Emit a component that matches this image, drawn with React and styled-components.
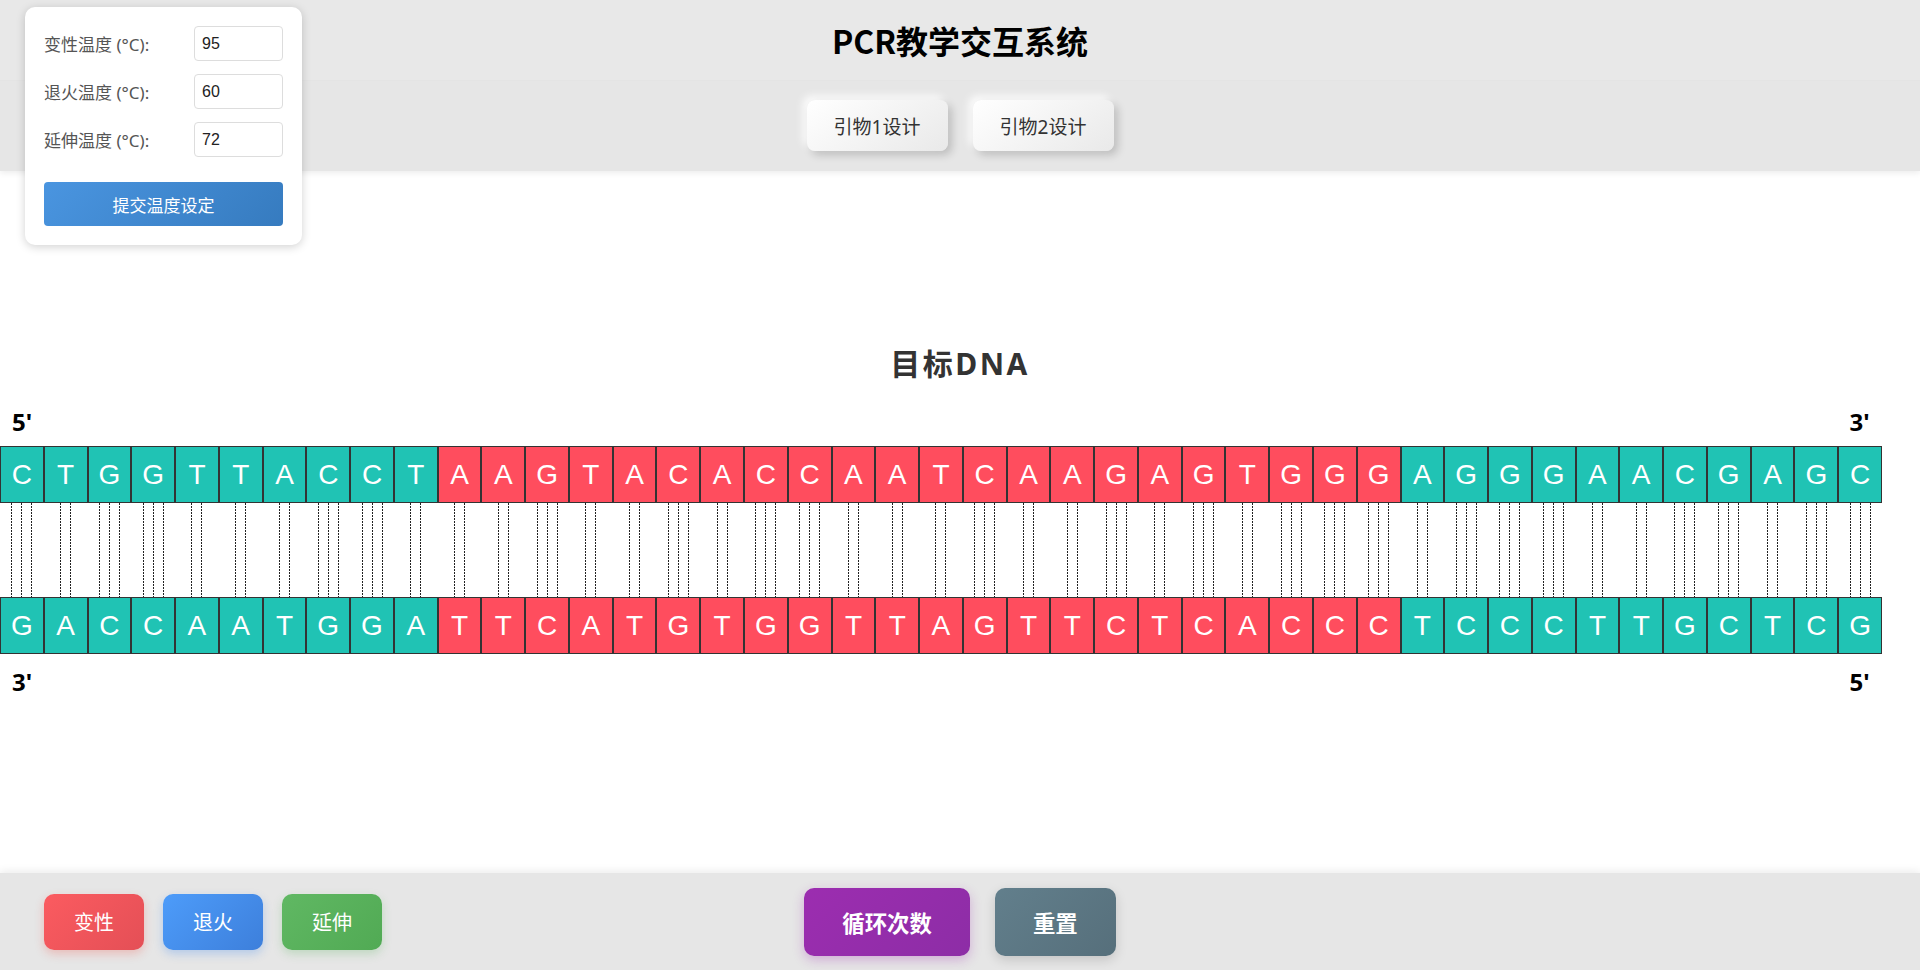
import { useState } from "react";
import styled, { createGlobalStyle } from "styled-components";

const GlobalStyle = createGlobalStyle`
    html, body {
        margin: 0;
        padding: 0;
        background: #ffffff;
        font-family: "Noto Sans", "Noto Sans CJK SC", sans-serif;
    }
    * {
        box-sizing: border-box;
    }
`;

const Page = styled.div`
    position: relative;
    height: 100vh;
    display: flex;
    flex-direction: column;
    overflow: hidden;
`;

const Header = styled.header`
    background-color: #e6e6e6;
    box-shadow: 0 2px 6px rgba(0, 0, 0, 0.08);
    position: relative;
    z-index: 1;
`;

const TitleRow = styled.div`
    height: 81px;
    display: flex;
    justify-content: center;
    align-items: center;
    background-color: #e8e8e8;
    border-bottom: 1px solid #e4e4e4;
`;

const Title = styled.h1`
    margin: 0;
    font-family: "Noto Sans CJK SC", sans-serif;
    font-size: 32px;
    font-weight: 700;
    color: #000;
    line-height: 40px;
`;

const PrimerRow = styled.div`
    height: 90px;
    display: flex;
    justify-content: center;
    align-items: flex-start;
    padding-top: 19px;
    gap: 25px;
`;

const PrimerButton = styled.button`
    width: 141px;
    height: 51px;
    border: none;
    border-radius: 8px;
    background: linear-gradient(145deg, #ffffff, #e9e9e9);
    box-shadow: 4px 4px 8px rgba(0, 0, 0, 0.18), -4px -4px 8px rgba(255, 255, 255, 0.9);
    font-family: "Noto Sans", "Noto Sans CJK SC", sans-serif;
    font-size: 19px;
    color: #333;
    cursor: pointer;
`;

const TempPanel = styled.div`
    position: absolute;
    top: 7px;
    left: 25px;
    width: 277px;
    background: #fff;
    border-radius: 10px;
    box-shadow: 0 2px 10px rgba(0, 0, 0, 0.18);
    padding: 19px 19px 19px;
    z-index: 5;
    display: flex;
    flex-direction: column;
    gap: 13px;
`;

const TempRow = styled.div`
    display: flex;
    justify-content: space-between;
    align-items: center;
`;

const TempLabel = styled.label`
    font-size: 17px;
    color: #555;
`;

const TempInput = styled.input`
    width: 89px;
    height: 35px;
    border: 1px solid #ddd;
    border-radius: 4px;
    padding: 0 7px;
    font-family: "Liberation Sans", Arial, sans-serif;
    font-size: 16px;
    color: #222;
    outline: none;
`;

const SubmitButton = styled.button`
    margin-top: 12px;
    height: 44px;
    width: 100%;
    border: none;
    border-radius: 4px;
    background: linear-gradient(135deg, #4a95e0, #367bbf);
    color: #fff;
    font-family: "Noto Sans CJK SC", sans-serif;
    font-size: 17px;
    cursor: pointer;
`;

const Main = styled.main`
    flex: 1;
    padding-top: 172px;
`;

const SectionTitle = styled.h2`
    margin: 0;
    text-align: center;
    font-size: 30px;
    line-height: 42px;
    letter-spacing: 2.5px;
    font-weight: 700;
    color: #333;
`;

const Dna = styled.div`
    width: 98%;
`;

const EndLabels = styled.div`
    display: flex;
    justify-content: space-between;
    padding: 0 12px;
    font-family: "Noto Sans", sans-serif;
    font-size: 24px;
    font-weight: 700;
    line-height: 30px;
    color: #000;
    margin-top: ${(p) => p.$top}px;
    margin-bottom: ${(p) => p.$bottom}px;
`;

const Strand = styled.div`
    display: flex;
    height: 57px;
`;

const Base = styled.div`
    flex: 1;
    display: flex;
    justify-content: center;
    align-items: center;
    background-color: ${(p) => (p.$target ? "#ff4d5e" : "#20c3b4")};
    border: 1px solid #333;
    color: #fff;
    font-family: "Liberation Sans", Arial, sans-serif;
    font-size: 28px;
`;

const Bonds = styled.div`
    display: flex;
    height: 94px;
`;

const BondCell = styled.div`
    flex: 1;
    display: flex;
    justify-content: center;
    gap: 9px;
`;

const Bond = styled.div`
    width: 1px;
    height: 100%;
    background: repeating-linear-gradient(to bottom, #222 0 2px, transparent 2px 3px);
`;

const Footer = styled.footer`
    height: 97px;
    flex-shrink: 0;
    background-color: #e6e6e6;
    box-shadow: 0 -2px 8px rgba(0, 0, 0, 0.08);
    display: grid;
    grid-template-columns: 1fr auto 1fr;
    align-items: center;
`;

const StepGroup = styled.div`
    display: flex;
    gap: 19px;
    padding-left: 44px;
`;

const stepColors = {
    red: ["#fb5b60", "#e44f56", "rgba(244, 67, 54, 0.25)"],
    blue: ["#4d9cfa", "#3d7fdb", "rgba(33, 118, 243, 0.25)"],
    green: ["#60b863", "#51aa54", "rgba(76, 175, 80, 0.25)"],
};

const StepButton = styled.button`
    width: 100px;
    height: 56px;
    border: none;
    border-radius: 10px;
    background: linear-gradient(135deg, ${(p) => stepColors[p.$color][0]}, ${(p) => stepColors[p.$color][1]});
    box-shadow: 0 4px 10px ${(p) => stepColors[p.$color][2]};
    color: #fff;
    font-family: "Noto Sans CJK SC", sans-serif;
    font-size: 20px;
    cursor: pointer;
`;

const MainGroup = styled.div`
    display: flex;
    gap: 25px;
`;

const BigButton = styled.button`
    height: 68px;
    padding: 0 38px;
    border: none;
    border-radius: 10px;
    background: ${(p) =>
        p.$reset
            ? "linear-gradient(135deg, #627f8c, #566f7b)"
            : "linear-gradient(135deg, #9c2db0, #8d2da6)"};
    box-shadow: 0 4px 12px ${(p) => (p.$reset ? "rgba(0, 0, 0, 0.15)" : "rgba(156, 39, 176, 0.3)")};
    color: #fff;
    font-family: "Noto Sans CJK SC", sans-serif;
    font-size: 22.4px;
    font-weight: 700;
    cursor: pointer;
`;

const TOP = "CTGGTTACCTAAGTACACCAATCAAGAGTGGGAGGGAACGAGC";
const PAIR = { A: "T", T: "A", G: "C", C: "G" };
const BOTTOM = TOP.split("").map((b) => PAIR[b]).join("");
const isTarget = (i) => i >= 10 && i <= 31;

const App = () => {
    const [temps, setTemps] = useState({ den: "95", ann: "60", ext: "72" });
    const setTemp = (key) => (e) => setTemps({ ...temps, [key]: e.target.value });

    return (
        <Page>
            <GlobalStyle />
            <Header>
                <TitleRow>
                    <Title>PCR教学交互系统</Title>
                </TitleRow>
                <PrimerRow>
                    <PrimerButton>引物1设计</PrimerButton>
                    <PrimerButton>引物2设计</PrimerButton>
                </PrimerRow>
            </Header>

            <TempPanel>
                <TempRow>
                    <TempLabel>变性温度 (°C):</TempLabel>
                    <TempInput value={temps.den} onChange={setTemp("den")} />
                </TempRow>
                <TempRow>
                    <TempLabel>退火温度 (°C):</TempLabel>
                    <TempInput value={temps.ann} onChange={setTemp("ann")} />
                </TempRow>
                <TempRow>
                    <TempLabel>延伸温度 (°C):</TempLabel>
                    <TempInput value={temps.ext} onChange={setTemp("ext")} />
                </TempRow>
                <SubmitButton>提交温度设定</SubmitButton>
            </TempPanel>

            <Main>
                <SectionTitle>目标DNA</SectionTitle>
                <Dna>
                    <EndLabels $top={22} $bottom={9}>
                        <span>5'</span>
                        <span>3'</span>
                    </EndLabels>
                    <Strand>
                        {TOP.split("").map((b, i) => (
                            <Base key={i} $target={isTarget(i)}>{b}</Base>
                        ))}
                    </Strand>
                    <Bonds>
                        {TOP.split("").map((b, i) => (
                            <BondCell key={i}>
                                {Array.from({ length: b === "G" || b === "C" ? 3 : 2 }).map((_, j) => (
                                    <Bond key={j} />
                                ))}
                            </BondCell>
                        ))}
                    </Bonds>
                    <Strand>
                        {BOTTOM.split("").map((b, i) => (
                            <Base key={i} $target={isTarget(i)}>{b}</Base>
                        ))}
                    </Strand>
                    <EndLabels $top={13} $bottom={0}>
                        <span>3'</span>
                        <span>5'</span>
                    </EndLabels>
                </Dna>
            </Main>

            <Footer>
                <StepGroup>
                    <StepButton $color="red">变性</StepButton>
                    <StepButton $color="blue">退火</StepButton>
                    <StepButton $color="green">延伸</StepButton>
                </StepGroup>
                <MainGroup>
                    <BigButton>循环次数</BigButton>
                    <BigButton $reset>重置</BigButton>
                </MainGroup>
                <div />
            </Footer>
        </Page>
    );
};

export default App;
